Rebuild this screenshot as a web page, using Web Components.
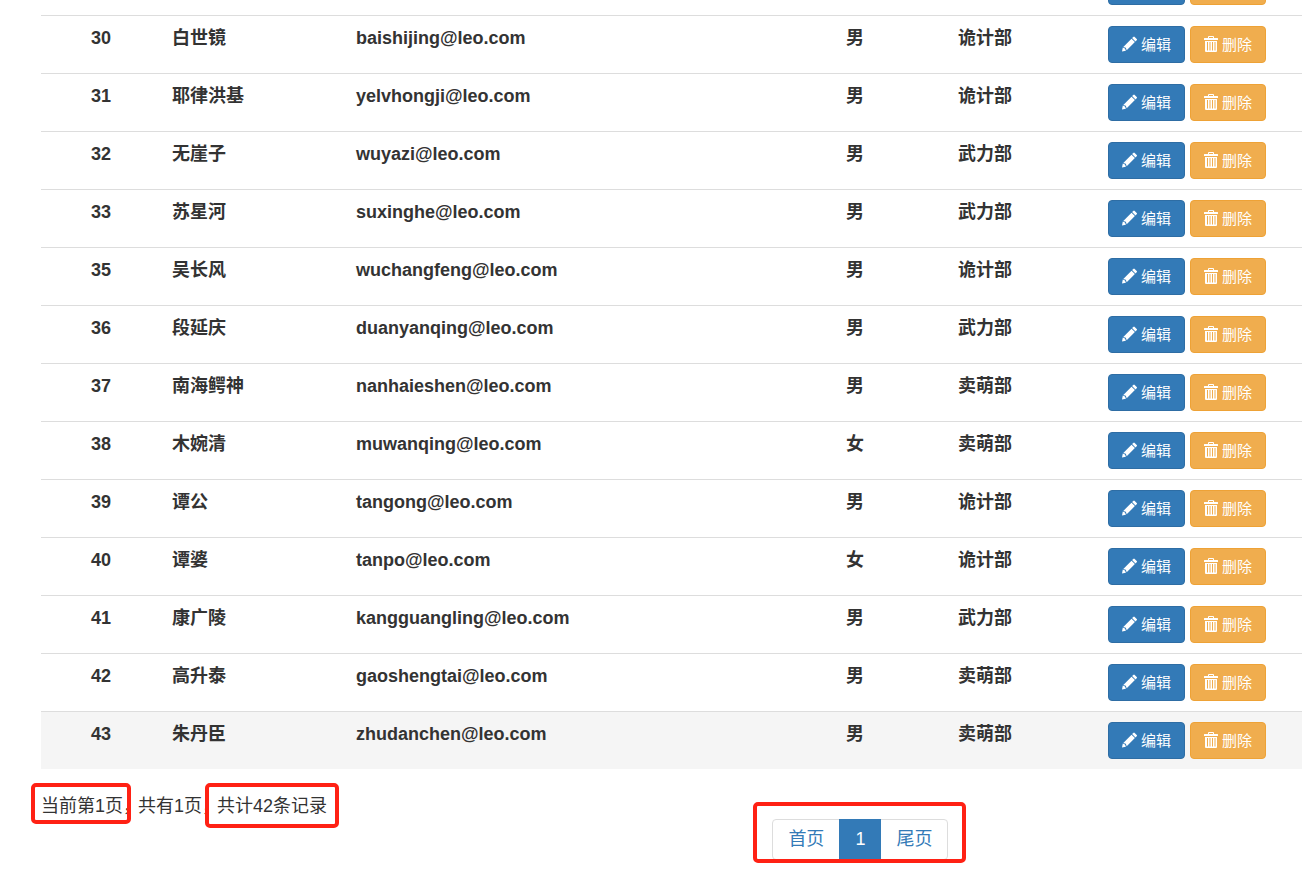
<!DOCTYPE html>
<html lang="zh-CN">
<head>
<meta charset="utf-8">
<meta name="viewport" content="width=device-width, initial-scale=1">
<title>员工列表</title>
<style>
  body {
    margin: 0;
    background: #fff;
    color: #333;
    font: 18px/25px "Liberation Sans", "Noto Sans CJK SC", sans-serif;
  }
</style>
</head>
<body>
<staff-page>
  <staff-table></staff-table>
  <page-summary slot="summary" current="1" pages="1" total="42"></page-summary>
  <page-nav slot="nav" current="1"></page-nav>
</staff-page>

<template id="staff-page">
  <style>
    :host { display: block; padding-left: 41px; overflow: hidden; }
    .list { margin-top: -43px; }
    .foot { display: grid; grid-template-columns: 58% 1fr; padding: 25px 0 12px; }
    .nav { padding-top: 25px; }
  </style>
  <div class="list"><slot></slot></div>
  <div class="foot">
    <slot name="summary"></slot>
    <div class="nav"><slot name="nav"></slot></div>
  </div>
</template>

<template id="staff-table">
  <style>
    :host { display: block; }
    table { width: 100%; table-layout: fixed; border-collapse: separate; border-spacing: 0; }
    th, td { box-sizing: border-box; padding: 10px; border-top: 1px solid #ddd; text-align: left; vertical-align: top; font-weight: 700; }
    .pick { width: 40px; }
    .id { width: 81px; }
    .name { width: 184px; }
    .sex { width: 112px; }
    .dept { width: 150px; }
    .ops { width: 204px; }
    tr:last-child { background: #f5f5f5; }
    .actions { display: flex; gap: 5px; }
  </style>
  <table>
    <colgroup>
      <col class="pick"><col class="id"><col class="name"><col><col class="sex"><col class="dept"><col class="ops">
    </colgroup>
    <tbody></tbody>
  </table>
</template>

<template id="action-button">
  <style>
    :host { display: block; }
    button {
      display: flex; align-items: center; gap: 4px; height: 37px; min-width: 77px; box-sizing: border-box;
      margin: 0; padding: 0 13px; border: 1px solid #2e6da4; border-radius: 4px;
      background: #337ab7; color: #fff; font: inherit; font-size: 15px; font-weight: 400;
      white-space: nowrap; cursor: pointer;
    }
    svg { display: block; height: 16px; margin-bottom: 2px; fill: currentColor; flex: none; }
    .trash { display: none; }
    :host([kind="delete"]) button { min-width: 76px; background: #f0ad4e; border-color: #eea236; }
    :host([kind="delete"]) .trash { display: block; }
    :host([kind="delete"]) .pencil { display: none; }
  </style>
  <button type="button">
    <svg class="pencil" width="15" viewBox="0 0 15 16" aria-hidden="true">
      <path d="M11.300.9a1 1 0 0 1 1.400 0l2 2a1 1 0 0 1 0 1.400l-1.200 1.200L10.100 2.100zM9.500 2.700l3.400 3.400-8.200 8.200-.9-2.500-2.500-.9zM.8 11.600l2.200.9.9 2.200L0 15.600z"/>
    </svg>
    <svg class="trash" width="14" viewBox="0 0 14 16" aria-hidden="true">
      <path fill-rule="evenodd" d="M4 2V1a1 1 0 0 1 1-1h4a1 1 0 0 1 1 1v1h3.500a.5.5 0 0 1 .5.5V4H0V2.500A.5.500 0 0 1 .5 2zM5 1v1h4V1zM1 5h12v10a1 1 0 0 1-1 1H2a1 1 0 0 1-1-1zM3 6v8.500h1V6zM5.500 6v8.500h1V6zM8 6v8.500h1V6zM10.500 6v8.500h1V6z"/>
    </svg>
    <span><slot></slot></span>
  </button>
</template>

<template id="page-summary">
  <style>
    :host { display: flex; align-items: flex-start; }
    span { position: relative; white-space: nowrap; }
    /* Tightens the blank half of the full-width comma. */
    span + span { margin-left: -3px; }
  </style>
  <span class="current"></span><span class="pages"></span><span class="total"></span>
</template>

<template id="page-nav">
  <style>
    :host { display: block; }
    nav { position: relative; display: flex; width: max-content; }
    a {
      padding: 7px 15px; border: 1px solid #ddd; margin-left: -1px; background: #fff;
      color: #337ab7; text-decoration: none;
    }
    a:first-of-type { margin-left: 0; border-radius: 4px 0 0 4px; }
    a:last-of-type { border-radius: 0 4px 4px 0; }
    a[aria-current] { position: relative; background: #337ab7; border-color: #337ab7; color: #fff; }
  </style>
  <nav aria-label="分页">
    <a href="#first">首页</a><a href="#page" aria-current="page"></a><a href="#last">尾页</a>
    <mark-box style="inset: -17px -18px -3px -19px"></mark-box>
  </nav>
</template>

<template id="mark-box">
  <style>
    :host {
      position: absolute; display: block; box-sizing: border-box;
      border: 4px solid #ff2114; border-radius: 5px; pointer-events: none;
    }
  </style>
</template>

<script>
  class Base extends HTMLElement {
    constructor() {
      super();
      const t = document.getElementById(this.localName);
      this.attachShadow({ mode: "open" }).append(t.content.cloneNode(true));
    }
    find(s) { return this.shadowRoot.querySelector(s); }
  }

  const STAFF = [
    ["", "", "", "", ""],
    ["30", "白世镜", "baishijing", "男", "诡计部"],
    ["31", "耶律洪基", "yelvhongji", "男", "诡计部"],
    ["32", "无崖子", "wuyazi", "男", "武力部"],
    ["33", "苏星河", "suxinghe", "男", "武力部"],
    ["35", "吴长风", "wuchangfeng", "男", "诡计部"],
    ["36", "段延庆", "duanyanqing", "男", "武力部"],
    ["37", "南海鳄神", "nanhaieshen", "男", "卖萌部"],
    ["38", "木婉清", "muwanqing", "女", "卖萌部"],
    ["39", "谭公", "tangong", "男", "诡计部"],
    ["40", "谭婆", "tanpo", "女", "诡计部"],
    ["41", "康广陵", "kangguangling", "男", "武力部"],
    ["42", "高升泰", "gaoshengtai", "男", "卖萌部"],
    ["43", "朱丹臣", "zhudanchen", "男", "卖萌部"]
  ];

  customElements.define("mark-box", class extends Base {});
  customElements.define("action-button", class extends Base {});

  customElements.define("staff-table", class extends Base {
    connectedCallback() {
      this.find("tbody").innerHTML = STAFF.map(([id, name, user, sex, dept]) => `
        <tr>
          <td></td><th scope="row">${id}</th><td>${name}</td><td>${user && user + "@leo.com"}</td>
          <td>${sex}</td><td>${dept}</td>
          <td><div class="actions"><action-button kind="edit">${id && "编辑"}</action-button><action-button kind="delete">${id && "删除"}</action-button></div></td>
        </tr>`).join("");
    }
  });

  customElements.define("page-summary", class extends Base {
    connectedCallback() {
      const get = (n) => this.getAttribute(n);
      this.find(".current").innerHTML = `当前第${get("current")}页，<mark-box style="inset: -11px 10px -5px -10px"></mark-box>`;
      this.find(".pages").textContent = `共有${get("pages")}页，`;
      this.find(".total").innerHTML = `共计${get("total")}条记录<mark-box style="inset: -11px -12px -9px -12px"></mark-box>`;
    }
  });

  customElements.define("page-nav", class extends Base {
    connectedCallback() {
      this.find("a[aria-current]").textContent = this.getAttribute("current");
    }
  });

  customElements.define("staff-page", class extends Base {});
</script>
</body>
</html>
